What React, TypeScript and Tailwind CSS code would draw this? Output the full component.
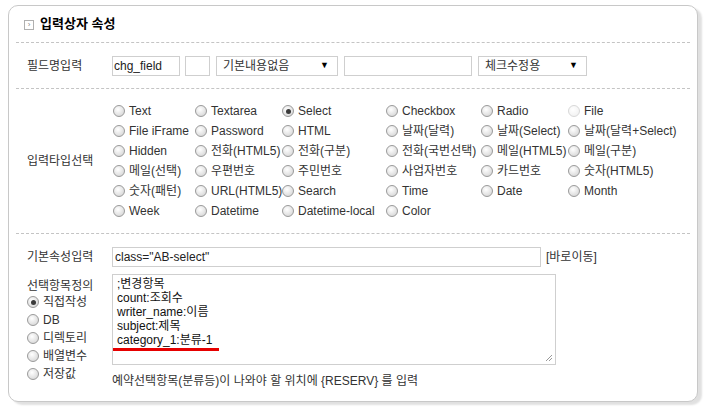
import React from "react";

const font = "font-['Liberation_Sans','Noto_Sans_CJK_KR',sans-serif]";

function Radio({ checked = false, disabled = false }: { checked?: boolean; disabled?: boolean }) {
  return (
    <span
      className={
        "relative inline-flex w-[12px] h-[12px] shrink-0 rounded-full items-center justify-center border " +
        (disabled
          ? "border-[#d8d8d8] bg-[radial-gradient(circle_at_40%_35%,#ffffff,#eeeeee)]"
          : "border-[#9a9a9a] bg-[radial-gradient(circle_at_40%_35%,#ffffff,#cfcfcf)]")
      }
    >
      {checked && <span className="w-[5px] h-[5px] rounded-full bg-[#3a3a3a]" />}
    </span>
  );
}

function RadioItem({ label, checked, disabled }: { label: string; checked?: boolean; disabled?: boolean }) {
  return (
    <div className="flex items-center gap-[4px] h-[20px] whitespace-nowrap">
      <Radio checked={checked} disabled={disabled} />
      <span className="text-[#333]">{label}</span>
    </div>
  );
}

function SelectBox({ text, width }: { text: string; width: string }) {
  return (
    <div className={"h-[20px] border border-[#cfcfcf] bg-white flex items-center justify-between pl-[6px] pr-[8px] " + width}>
      <span className="text-[#333]">{text}</span>
      <span className="text-[9px] text-black leading-none">▼</span>
    </div>
  );
}

const types: { l: string; c?: boolean; d?: boolean }[][] = [
  [{ l: "Text" }, { l: "Textarea" }, { l: "Select", c: true }, { l: "Checkbox" }, { l: "Radio" }, { l: "File", d: true }],
  [{ l: "File iFrame" }, { l: "Password" }, { l: "HTML" }, { l: "날짜(달력)" }, { l: "날짜(Select)" }, { l: "날짜(달력+Select)" }],
  [{ l: "Hidden" }, { l: "전화(HTML5)" }, { l: "전화(구분)" }, { l: "전화(국번선택)" }, { l: "메일(HTML5)" }, { l: "메일(구분)" }],
  [{ l: "메일(선택)" }, { l: "우편번호" }, { l: "주민번호" }, { l: "사업자번호" }, { l: "카드번호" }, { l: "숫자(HTML5)" }],
  [{ l: "숫자(패턴)" }, { l: "URL(HTML5)" }, { l: "Search" }, { l: "Time" }, { l: "Date" }, { l: "Month" }],
  [{ l: "Week" }, { l: "Datetime" }, { l: "Datetime-local" }, { l: "Color" }],
];

export default function App() {
  return (
    <div className={"w-[712px] h-[409px] bg-white text-[12px] leading-[14px] text-[#333] pt-[5px] pl-[8px] " + font}>
      <div className="w-[690px] h-[397px] border border-[#c8c8c8] rounded-[10px] bg-white shadow-[4px_3px_2px_rgba(0,0,0,0.12)] px-[7px]">
        {/* header */}
        <div className="h-[37px] flex items-center pl-[8px] border-b border-dashed border-[#c4c4c4]">
          <span className="w-[10px] h-[10px] border border-[#b0b0b0] flex items-center justify-center text-[8px] leading-none text-[#888] mr-[6px] mt-[1px]">
            ›
          </span>
          <span className="text-[13px] font-bold text-black">입력상자 속성</span>
        </div>

        {/* field name */}
        <div className="h-[46px] flex items-center border-b border-dashed border-[#c4c4c4] pl-[11px]">
          <div className="w-[85px]">필드명입력</div>
          <div className="flex items-center">
            <div className="w-[68px] h-[20px] border border-[#cfcfcf] flex items-center pl-[1px] text-[#222]">chg_field</div>
            <div className="w-[25px] h-[20px] border border-[#cfcfcf] ml-[5px]" />
            <div className="ml-[6px]">
              <SelectBox text="기본내용없음" width="w-[122px]" />
            </div>
            <div className="w-[128px] h-[20px] border border-[#cfcfcf] ml-[6px]" />
            <div className="ml-[6px]">
              <SelectBox text="체크수정용" width="w-[109px]" />
            </div>
          </div>
        </div>

        {/* input types */}
        <div className="h-[145px] flex items-center border-b border-dashed border-[#c4c4c4] pl-[11px]">
          <div className="w-[86px]">입력타입선택</div>
          <div className="grid grid-cols-[82px_87px_104px_95px_87px_auto]">
            {types.map((row, i) =>
              row.map((t, j) => <RadioItem key={i + "-" + j} label={t.l} checked={t.c} disabled={t.d} />)
            )}
          </div>
        </div>

        {/* attributes */}
        <div className="pt-[13px] pl-[11px]">
          <div className="flex items-center h-[20px]">
            <div className="w-[85px]">기본속성입력</div>
            <div className="w-[429px] h-[20px] border border-[#cfcfcf] flex items-center pl-[2px] text-[#222]">class="AB-select"</div>
            <div className="ml-[5px]">[바로이동]</div>
          </div>
          <div className="flex mt-[7px]">
            <div className="w-[85px] pt-[3px]">
              <div className="h-[17px] flex items-center">선택항목정의</div>
              <div className="flex flex-col -mt-[1px]">
                {["직접작성", "DB", "디렉토리", "배열변수", "저장값"].map((l, i) => (
                  <div key={l} className="flex items-center gap-[4px] h-[18px]">
                    <Radio checked={i === 0} />
                    <span>{l}</span>
                  </div>
                ))}
              </div>
            </div>
            <div>
              <div className="relative w-[444px] h-[91px] border border-[#cfcfcf] pl-[4px] pt-[2px] text-[#111] leading-[14px]">
                <div>;변경항목</div>
                <div>count:조회수</div>
                <div>writer_name:이름</div>
                <div>subject:제목</div>
                <div>category_1:분류-1</div>
                <span className="absolute left-[0px] top-[73px] w-[106px] h-[3px] bg-[#e60000]" />
                <svg className="absolute right-[2px] bottom-[2px]" width="8" height="8" viewBox="0 0 8 8">
                  <path d="M7 1 L1 7 M7 4 L4 7" stroke="#999" strokeWidth="1" />
                </svg>
              </div>
              <div className="mt-[9px]">예약선택항목(분류등)이 나와야 할 위치에 {"{RESERV}"} 를 입력</div>
            </div>
          </div>
        </div>
      </div>
    </div>
  );
}
